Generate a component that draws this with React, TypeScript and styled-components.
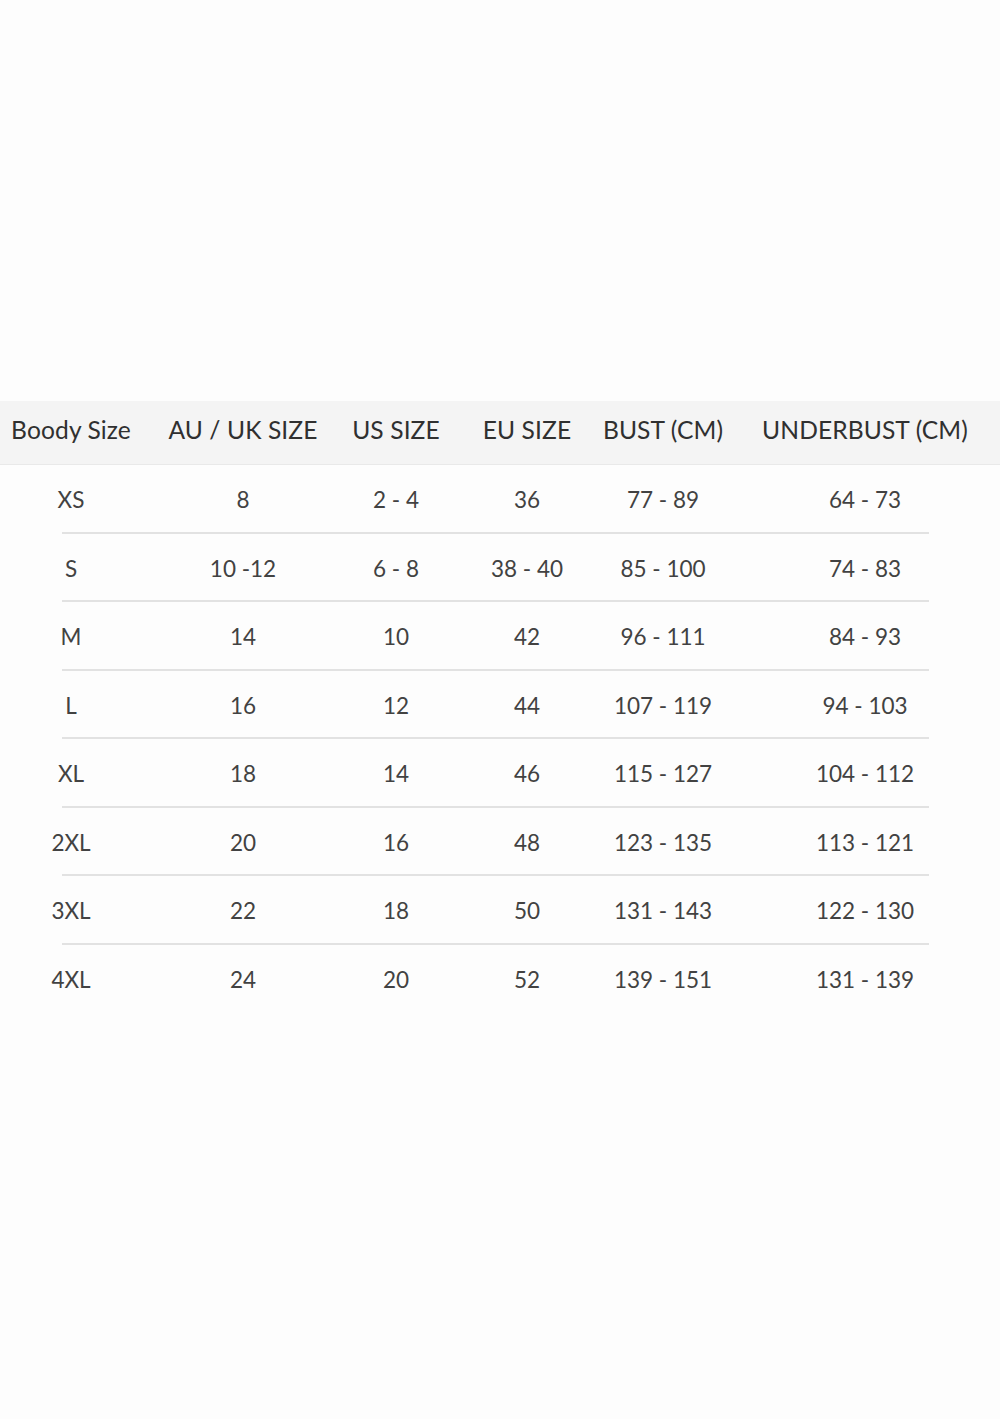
import React, { ReactElement } from 'react'
import styled, { createGlobalStyle } from 'styled-components'

const GlobalStyle = createGlobalStyle`
  html, body {
    margin: 0;
    padding: 0;
    background: #fdfdfd;
  }
  body {
    font-family: Lato, 'Open Sans', sans-serif;
  }
`

const Page = styled.main`
  width: 1000px;
  height: 1419px;
  padding-top: 401px;
  box-sizing: border-box;
`

const COLS = '142px 202px 104px 158px 114px 290px'

const HeadRow = styled.div`
  display: grid;
  grid-template-columns: ${COLS};
  height: 64px;
  padding-bottom: 6px;
  background: #f4f4f4;
  border-bottom: 1px solid #e9e9e9;
  box-sizing: border-box;
`

const Row = styled.div`
  display: grid;
  grid-template-columns: ${COLS};
  height: 66.5px;
  padding-top: 3px;
  box-sizing: border-box;
`

const Cell = styled.div<{ $head?: boolean }>`
  display: flex;
  align-items: center;
  justify-content: center;
  white-space: nowrap;
  font-size: ${p => (p.$head ? '24.6px' : '22.5px')};
  color: ${p => (p.$head ? '#303030' : '#424242')};
  letter-spacing: ${p => (p.$head ? '0.1px' : '0')};
`

const Divider = styled.hr`
  margin: 0 0 0 62px;
  width: 867px;
  height: 2px;
  border: 0;
  background: #e2e2e2;
`

const headers = ['Boody Size', 'AU / UK SIZE', 'US SIZE', 'EU SIZE', 'BUST (CM)', 'UNDERBUST (CM)']

const rows: string[][] = [
  ['XS', '8', '2 - 4', '36', '77 - 89', '64 - 73'],
  ['S', '10 -12', '6 - 8', '38 - 40', '85 - 100', '74 - 83'],
  ['M', '14', '10', '42', '96 - 111', '84 - 93'],
  ['L', '16', '12', '44', '107 - 119', '94 - 103'],
  ['XL', '18', '14', '46', '115 - 127', '104 - 112'],
  ['2XL', '20', '16', '48', '123 - 135', '113 - 121'],
  ['3XL', '22', '18', '50', '131 - 143', '122 - 130'],
  ['4XL', '24', '20', '52', '139 - 151', '131 - 139'],
]

export default function App(): ReactElement {
  return (
    <>
      <GlobalStyle />
      <Page>
        <HeadRow>
          {headers.map(h => (
            <Cell $head key={h}>{h}</Cell>
          ))}
        </HeadRow>
        {rows.map((r, i) => (
          <React.Fragment key={r[0]}>
            {i > 0 && <Divider />}
            <Row>
              {r.map((c, j) => (
                <Cell key={j}>{c}</Cell>
              ))}
            </Row>
          </React.Fragment>
        ))}
      </Page>
    </>
  )
}
